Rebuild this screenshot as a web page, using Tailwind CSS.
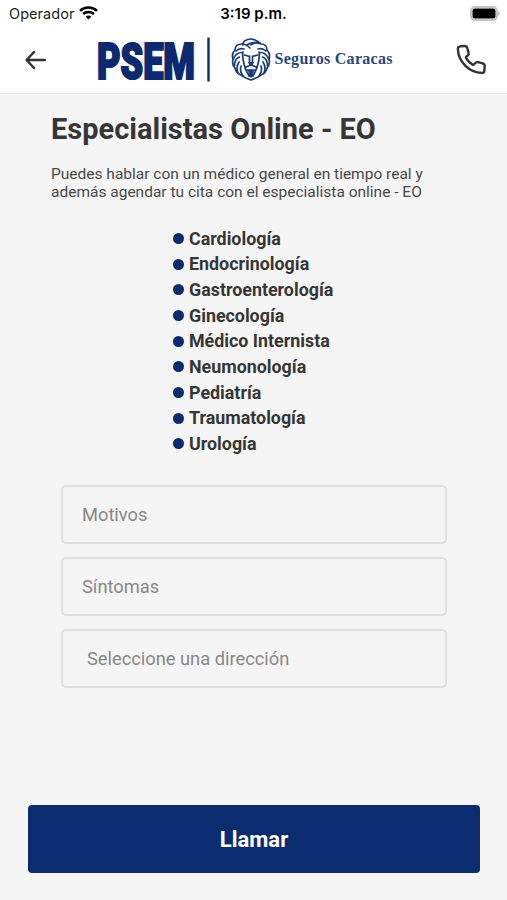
<!DOCTYPE html>
<html lang="es">
<head>
  <meta charset="UTF-8" />
  <meta name="viewport" content="width=device-width, initial-scale=1.0"/>
  <title>Especialistas Online</title>
  <script src="https://cdn.jsdelivr.net/npm/@tailwindcss/browser@4"></script>
</head>
<body class="bg-[#f5f5f5] text-[#363636] font-['Roboto',sans-serif] h-[900px] flex flex-col overflow-hidden">

  <!-- Status bar -->
  <div class="bg-white h-7 shrink-0 grid grid-cols-3 items-center pl-[9px] pr-[7px] text-black font-['Inter',sans-serif] text-[14px] leading-none">
    <div class="flex items-center gap-[5px]">
      <span class="text-[#222222] text-[14.5px] tracking-[0.05px]">Operador</span>
      <svg class="w-[19px] h-[14px] -mt-[2px]" viewBox="0 0 19 14" fill="none" stroke="#000" stroke-width="2.5">
        <path d="M1 4.8C5.7.3 13.3.3 18 4.8"/>
        <path d="M4.1 8c3.1-2.8 7.7-2.8 10.8 0"/>
        <path d="M6.6 10.5c1.7-1.5 4.1-1.5 5.8 0L9.500 13.4z" fill="#000" stroke="none"/>
      </svg>
    </div>
    <div class="text-center font-semibold text-[15px] -ml-[2px] -mt-px whitespace-nowrap">3:19 p.m.</div>
    <div class="flex justify-end">
      <svg class="w-[30px] h-[15px] -mt-[2px]" viewBox="0 0 30 15">
        <rect x="1" y="1" width="26" height="13" rx="4" fill="#fff" stroke="#c4c4c4" stroke-width="2"/>
        <rect x="2.5" y="2.5" width="23" height="10" rx="2.2" fill="#000"/>
        <path d="M28.3 5.2c2 .8 2 3.8 0 4.6z" fill="#aaa"/>
      </svg>
    </div>
  </div>

  <!-- Header -->
  <header class="bg-white h-[66px] shrink-0 border-b border-[#ededed] flex items-center pl-[25px] pr-[20px]">
    <button class="w-[22px] h-[66px] pb-[2px] flex items-center" aria-label="Volver">
      <svg class="w-[22px] h-[20px]" viewBox="0 0 22 20" fill="none" stroke="#333" stroke-width="2.5" stroke-linecap="round" stroke-linejoin="round">
        <path d="M9 2 1.6 10 9 18M2 10h17.800"/>
      </svg>
    </button>

    <svg class="w-[300px] h-[50px] ml-[47px] overflow-visible" viewBox="94 35 300 50" fill="#0b2a6f">
      <text x="0" y="0" transform="translate(97 77.600) scale(.7 1)" font-family="Roboto" font-weight="900" font-size="50" textLength="140" lengthAdjust="spacingAndGlyphs" stroke="#0b2a6f" stroke-width="2.2">PSEM</text>
      <rect x="207.3" y="36.500" width="2.4" height="44"/>
      <!-- Lion -->
      <g fill="none" stroke="#173a78" stroke-width="1.7" stroke-linecap="round" stroke-linejoin="round" transform="translate(0 -1)">
        <path d="M243 45c-1-3 3-6 8-6 4 0 6 2 9 4-4-1-7 0-9 2"/>
        <path d="M247 45c4-3 10-3 14-1 4 0 6 3 6 6 3 3 3 6 2 9 1 4 0 7-2 9-1 4-3 6-6 7-2 2-5 3-10 5-5-2-8-3-10-5-3-1-5-3-6-7-2-2-3-5-2-9-1-3-1-6 2-9 0-4 3-6 7-6 3 0 6 2 8 4"/>
        <path d="M236 51c2-2 5-3 8-2M233.5 58.5c2-4 5-6 8-6M234.5 66c0-5 2-8 5-9M238 73c-2-5-1-8 1-11M243 76c-3-4-3-7-2-10M266 51c-2-2-5-3-8-2M268.5 58.5c-2-4-5-6-8-6M267.5 66c0-5-2-8-5-9M264 73c2-5 1-8-1-11M259 76c3-4 3-7 2-10"/>
        <path d="M243 52c-1 4 0 8 1 12 1 5 3 8 5 12M259 52c1 4 0 8-1 12-1 5-3 8-5 12M244.5 55l5 1.5M257.5 55l-5 1.5M249.5 56v6M252.5 56v6M246 67l5-2 5 2M247 70h8"/>
        <path d="M248 62h6l-1.5 3.5h-3zM248 70h6l-1 6-2 2-2-2z" fill="#173a78" stroke="none"/>
      </g>
      <text x="274.5" y="63" font-family="Liberation Serif" font-weight="700" font-size="16" fill="#264680" textLength="118" lengthAdjust="spacing">Seguros Caracas</text>
    </svg>

    <button class="ml-auto w-[31px] h-[66px] pb-[3px] flex items-center" aria-label="Llamar">
      <svg class="w-[31px] h-[31px]" viewBox="0 0 31 31" fill="none" stroke="#333" stroke-width="2.4" stroke-linejoin="round" stroke-linecap="round">
        <path d="M4 2.400 8.400 2c1.500-.1 2.500.6 2.900 2l1.300 4.700c.3 1.100 0 1.900-.8 2.600l-1.500 1.300c-.5.5-.5 1-.2 1.500 1.600 2.800 3.700 4.900 6.500 6.500.6.3 1.100.2 1.500-.3l1.200-1.300c.8-.8 1.600-1.100 2.700-.8l4.600 1.200c1.500.4 2.200 1.300 2.100 2.900l-.3 4.300c-.1 1.500-.9 2.300-2.400 2.300C13.200 28.500 2 17.800 1.900 4.800c0-1.400.7-2.200 2.100-2.400z"/>
      </svg>
    </button>
  </header>

  <main class="flex-1 flex flex-col">
    <h1 class="mt-[17px] ml-[51px] text-[29px] leading-9 font-bold whitespace-nowrap">Especialistas Online - EO</h1>
    <p class="mt-[18px] ml-[51px] text-[15.5px] leading-[18px] text-[#484848] whitespace-nowrap">
      Puedes hablar con un médico general en tiempo real y<br>
      además agendar tu cita con el especialista online - EO
    </p>

    <ul class="mt-[24.6px] ml-[173px] text-[17.85px] leading-[25.65px] font-bold">
      <li class="flex items-center gap-[5px]"><span class="size-[11px] rounded-full bg-[#0b2a6f]"></span>Cardiología</li>
      <li class="flex items-center gap-[5px]"><span class="size-[11px] rounded-full bg-[#0b2a6f]"></span>Endocrinología</li>
      <li class="flex items-center gap-[5px]"><span class="size-[11px] rounded-full bg-[#0b2a6f]"></span>Gastroenterología</li>
      <li class="flex items-center gap-[5px]"><span class="size-[11px] rounded-full bg-[#0b2a6f]"></span>Ginecología</li>
      <li class="flex items-center gap-[5px]"><span class="size-[11px] rounded-full bg-[#0b2a6f]"></span>Médico Internista</li>
      <li class="flex items-center gap-[5px]"><span class="size-[11px] rounded-full bg-[#0b2a6f]"></span>Neumonología</li>
      <li class="flex items-center gap-[5px]"><span class="size-[11px] rounded-full bg-[#0b2a6f]"></span>Pediatría</li>
      <li class="flex items-center gap-[5px]"><span class="size-[11px] rounded-full bg-[#0b2a6f]"></span>Traumatología</li>
      <li class="flex items-center gap-[5px]"><span class="size-[11px] rounded-full bg-[#0b2a6f]"></span>Urología</li>
    </ul>

    <form class="mt-[28.4px] ml-[61px] w-[386px] flex flex-col gap-[13px] text-[18.3px] text-[#888888]">
      <div class="h-[59px] border-2 border-[#e0e0e0] rounded-[5px] flex items-center pl-[19px]">Motivos</div>
      <div class="h-[59px] border-2 border-[#e0e0e0] rounded-[5px] flex items-center pl-[19px]">Síntomas</div>
      <div class="h-[59px] border-2 border-[#e0e0e0] rounded-[5px] flex items-center pl-[24px]">Seleccione una dirección</div>
    </form>

    <button class="mt-auto mb-[27px] ml-[28px] mr-[27px] h-[68px] rounded-[4px] bg-[#0b2c70] text-white text-[22px] font-bold">Llamar</button>
  </main>

</body>
</html>
